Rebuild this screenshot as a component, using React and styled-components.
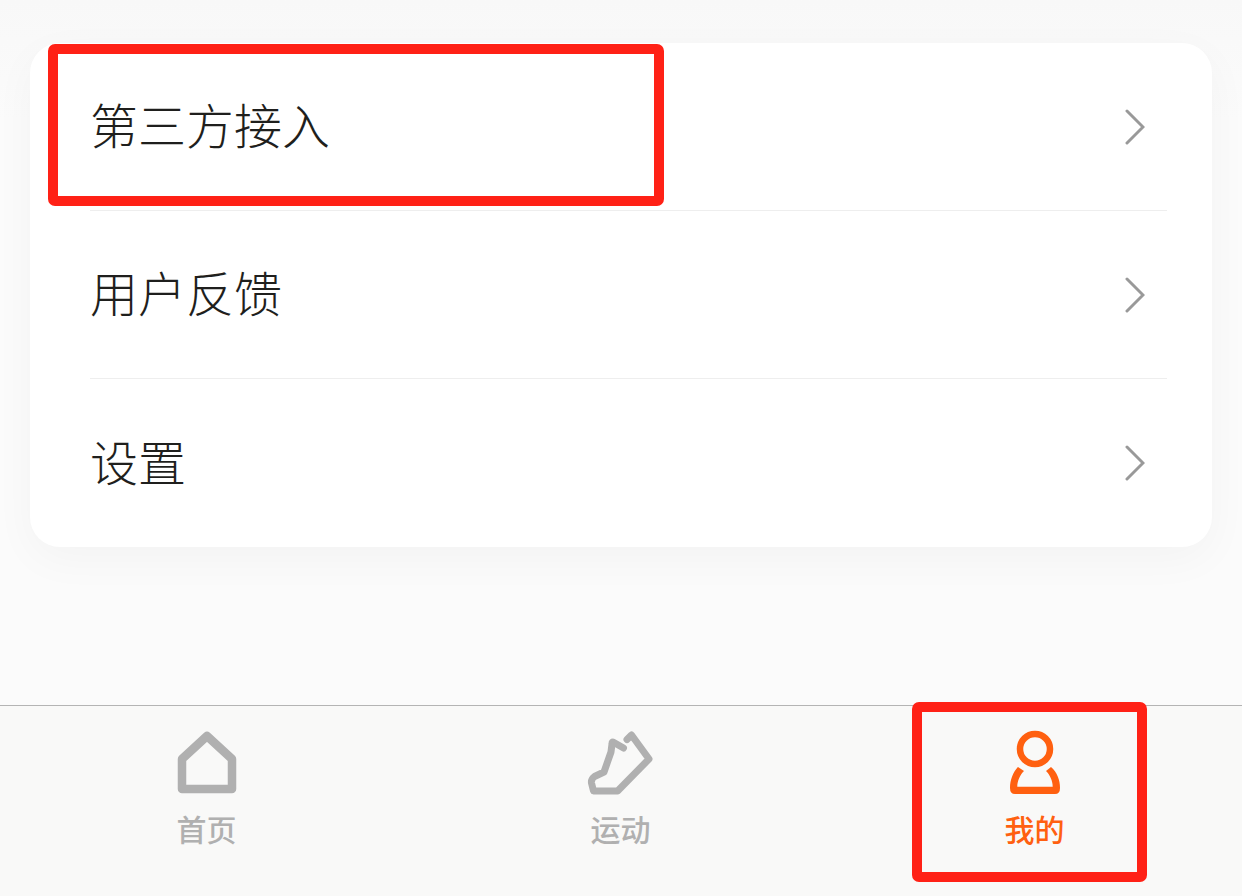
import React from 'react';
import styled, { createGlobalStyle } from 'styled-components';

const GlobalStyle = createGlobalStyle`
  html, body {
    margin: 0;
    padding: 0;
    background: #fafafa;
    font-family: "Noto Sans CJK SC", "Noto Sans", sans-serif;
  }
`;

const Page = styled.div`
  position: relative;
  display: flex;
  flex-direction: column;
  width: 1242px;
  height: 896px;
  overflow: hidden;
  background: linear-gradient(#f8f8f8, #fbfbfb 120px);
`;

const Content = styled.main`
  flex: 1;
  padding: 43px 30px 0;
`;

const Card = styled.section`
  background: #fff;
  border-radius: 30px;
  padding: 0 45px 0 60px;
  box-shadow: 0 12px 44px rgba(0, 0, 0, 0.035);
`;

const Row = styled.div`
  display: flex;
  align-items: center;
  justify-content: space-between;
  height: 167px;
  border-bottom: 1px solid #eeeeee;

  &:last-child {
    height: 168px;
    border-bottom: none;
  }
`;

const RowLabel = styled.span`
  font-size: 48px;
  line-height: 1;
  font-weight: 300;
  color: #1f1f1d;
  margin-bottom: 7px;
`;

const Chevron = styled.svg`
  width: 20px;
  height: 36px;
  margin-right: 22px;
  fill: none;
  stroke: #999;
  stroke-width: 3;
  stroke-linecap: round;
  stroke-linejoin: miter;
`;

const TabBar = styled.nav`
  display: grid;
  grid-template-columns: repeat(3, 1fr);
  height: 190px;
  border-top: 1px solid #b4b4b4;
  background: #f9f9f8;
`;

const Tab = styled.div`
  display: flex;
  flex-direction: column;
  align-items: center;
  padding-top: 22px;
  color: ${({ $active }) => ($active ? '#ff6010' : '#b0b0b0')};
`;

const TabIcon = styled.svg`
  width: 70px;
  height: 70px;
  fill: none;
  stroke: currentColor;
  stroke-linecap: round;
  stroke-linejoin: round;
`;

const TabLabel = styled.span`
  margin-top: 15px;
  margin-right: 1px;
  font-size: 30px;
  line-height: 30px;
  font-weight: 500;
`;

const Highlight = styled.div`
  position: absolute;
  box-sizing: border-box;
  border: 10px solid #ff2116;
  border-radius: 7px;
  left: ${({ $x }) => $x}px;
  top: ${({ $y }) => $y}px;
  width: ${({ $w }) => $w}px;
  height: ${({ $h }) => $h}px;
`;

const HomeIcon = () => (
  <TabIcon viewBox="0 0 70 70" strokeWidth="8.5">
    <path d="M35 8 L60 31 V61 H10 V31 Z" />
  </TabIcon>
);

const ShoeIcon = () => (
  <TabIcon viewBox="0 0 70 70" strokeWidth="7">
    <path d="M37.5 20 L27 14 Q26 14 26 16 L25 24 L18 44 L8.5 48.5 Q5 51 5.5 55 L7.5 63 H31.6 L63 31 L45.5 7 L41 11.5" />
  </TabIcon>
);

const PersonIcon = () => (
  <TabIcon viewBox="0 0 70 70" strokeWidth="6.5">
    <circle cx="35" cy="21" r="15" />
    <path
      fill="currentColor"
      stroke="none"
      d="M18 39 C13 44 10 52 10 60 Q10 66 15 66 L55 66 Q60 66 60 60 C60 52 57 44 51 39 L46 43 C50 47 52.7 53 52.7 58.7 L17.3 58.7 C17.3 53 20 47 24 43 Z"
    />
  </TabIcon>
);

const rows = ['第三方接入', '用户反馈', '设置'];

const tabs = [
  { label: '首页', Icon: HomeIcon },
  { label: '运动', Icon: ShoeIcon },
  { label: '我的', Icon: PersonIcon, active: true },
];

const App = () => (
  <Page>
    <GlobalStyle />
    <Content>
      <Card>
        {rows.map((label) => (
          <Row key={label}>
            <RowLabel>{label}</RowLabel>
            <Chevron viewBox="0 0 20 36">
              <path d="M2 2 L18 18 L2 34" />
            </Chevron>
          </Row>
        ))}
      </Card>
    </Content>
    <TabBar>
      {tabs.map(({ label, Icon, active }) => (
        <Tab key={label} $active={active}>
          <Icon />
          <TabLabel>{label}</TabLabel>
        </Tab>
      ))}
    </TabBar>
    {/* red annotation boxes drawn over the screenshot */}
    <Highlight $x={48} $y={44} $w={616} $h={162} />
    <Highlight $x={912} $y={702} $w={235} $h={180} />
  </Page>
);

export default App;
